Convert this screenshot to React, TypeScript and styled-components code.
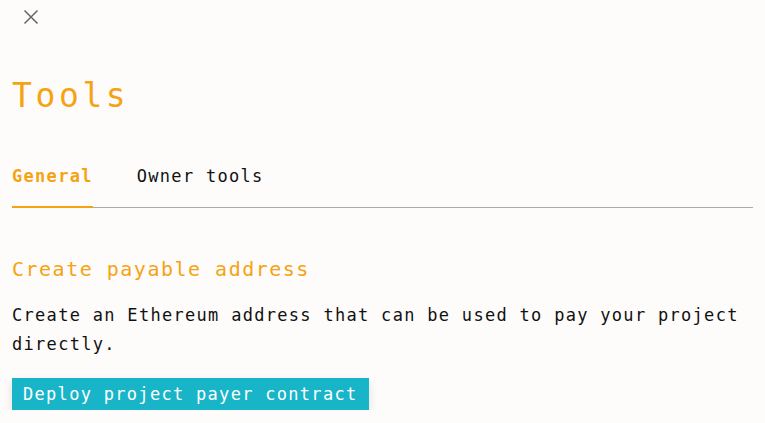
import React from "react";
import styled, { createGlobalStyle } from "styled-components";

const Global = createGlobalStyle`
  html, body { margin: 0; padding: 0; background: #fdfcfb; }
  body { font-family: "DejaVu Sans Mono", "Liberation Mono", monospace; color: #111; }
  * { box-sizing: border-box; }
`;

const Page = styled.div`
  display: flex;
  flex-direction: column;
  padding: 8px 12px 0 12px;
  width: 765px;
`;

const CloseButton = styled.button`
  width: 18px;
  height: 18px;
  padding: 0;
  margin-left: 10px;
  border: none;
  background: transparent;
  color: #666;
  display: flex;
  align-items: center;
  justify-content: center;
`;

const Title = styled.h1`
  margin: 50px 0 0 0;
  font-size: 33px;
  line-height: 40px;
  font-weight: 400;
  letter-spacing: 3.6px;
  color: #f5a312;
`;

const Tabs = styled.div`
  display: flex;
  gap: 44px;
  margin-top: 49px;
  border-bottom: 1px solid #a9a9a9;
`;

const Tab = styled.div<{ $active?: boolean }>`
  font-size: 17px;
  line-height: 22px;
  letter-spacing: 1.3px;
  padding-bottom: 19px;
  margin-bottom: -1px;
  font-weight: ${(p) => (p.$active ? 700 : 400)};
  color: ${(p) => (p.$active ? "#f5a312" : "#111")};
  border-bottom: 2px solid ${(p) => (p.$active ? "#f5a312" : "transparent")};
`;

const SectionTitle = styled.h2`
  margin: 48px 0 0 0;
  font-size: 20px;
  line-height: 26px;
  font-weight: 400;
  letter-spacing: 1.5px;
  color: #f5a312;
`;

const Body = styled.p`
  margin: 19px 0 0 0;
  font-size: 17px;
  line-height: 29px;
  letter-spacing: 1.3px;
  color: #111;
`;

const PrimaryButton = styled.button`
  align-self: flex-start;
  margin-top: 19px;
  height: 32px;
  padding: 0 11px;
  border: none;
  background: #18b4c8;
  color: #fff;
  font-family: inherit;
  font-size: 17px;
  letter-spacing: 1.3px;
  box-shadow: 0 4px 10px rgba(0, 0, 0, 0.12);
`;

export default function App() {
  return (
    <>
      <Global />
      <Page>
        <CloseButton aria-label="Close">
          <svg width="16" height="16" viewBox="0 0 16 16" fill="none" stroke="currentColor" strokeWidth="1.5">
            <path d="M1.5 1.5 L14.5 14.5 M14.5 1.5 L1.5 14.5" />
          </svg>
        </CloseButton>
        <Title>Tools</Title>
        <Tabs>
          <Tab $active>General</Tab>
          <Tab>Owner tools</Tab>
        </Tabs>
        <SectionTitle>Create payable address</SectionTitle>
        <Body>Create an Ethereum address that can be used to pay your project directly.</Body>
        <PrimaryButton>Deploy project payer contract</PrimaryButton>
      </Page>
    </>
  );
}
